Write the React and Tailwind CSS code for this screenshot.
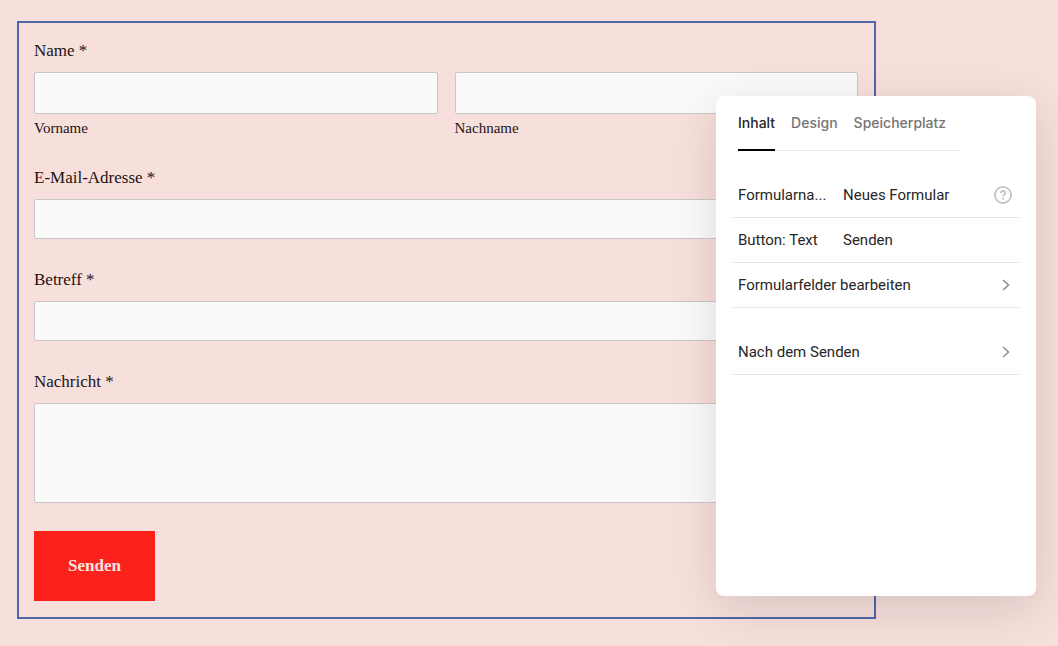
import React, { useState } from "react";
import { clsx } from "clsx";

const tabs = ["Inhalt", "Design", "Speicherplatz"];

const fieldStyle =
  "block w-full rounded-xs border border-[#c9c7c7] bg-[#fafafa] px-3 text-base text-[#1d1414] outline-none";

function Field({ id, label, multiline }) {
  return (
    <div>
      <label htmlFor={id} className="mb-2 block text-[17px] leading-[26px]">
        {label} *
      </label>
      {multiline ? (
        <textarea id={id} className={clsx(fieldStyle, "h-[100px] resize-none")} />
      ) : (
        <input id={id} type="text" className={clsx(fieldStyle, "h-10")} />
      )}
    </div>
  );
}

function NameField({ id, caption }) {
  return (
    <div className="flex-1">
      <input id={id} type="text" className={clsx(fieldStyle, "h-[42px]")} />
      <label htmlFor={id} className="mt-[5px] block text-[15px] leading-[18px]">
        {caption}
      </label>
    </div>
  );
}

function ContactForm() {
  return (
    <form
      onSubmit={(e) => e.preventDefault()}
      className="flex flex-col gap-7 border-2 border-[#5066a8] pt-[15px] pr-4 pb-4 pl-[15px] font-['Liberation_Serif',serif] text-[#1d1414]"
    >
      <fieldset>
        <legend className="mb-2 text-[17px] leading-[26px]">Name *</legend>
        <div className="flex gap-[17px]">
          <NameField id="vorname" caption="Vorname" />
          <NameField id="nachname" caption="Nachname" />
        </div>
      </fieldset>
      <Field id="email" label="E-Mail-Adresse" />
      <Field id="betreff" label="Betreff" />
      <Field id="nachricht" label="Nachricht" multiline />
      <button
        type="submit"
        className="h-[70px] self-start bg-[#fc221b] px-[34px] text-[17px] font-bold text-[#fde3e0]"
      >
        Senden
      </button>
    </form>
  );
}

function HelpIcon() {
  return (
    <svg viewBox="0 0 20 20" className="mr-px size-5" fill="none" stroke="#c4c4c4" strokeWidth="1.8">
      <circle cx="10" cy="10" r="8.1" />
      <path d="M7.7 8.2c0-1.4 1-2.2 2.3-2.2s2.3.8 2.3 2c0 1.6-2.2 1.700-2.200 3.500" />
      <path d="M10.100 12.800v1.700" />
    </svg>
  );
}

function Chevron() {
  return (
    <svg viewBox="0 0 10 12" className="mr-[3px] h-3 w-2.5" fill="none" stroke="#8f8f8f" strokeWidth="1.6">
      <path d="M2 1l5.500 5L2 11" />
    </svg>
  );
}

function TextRow({ id, label, value, help }) {
  return (
    <div className="flex h-[45px] items-center border-b border-[#e4e4e4] px-[5px]">
      <label htmlFor={id} className="w-[105px] shrink-0">
        {label}
      </label>
      <input id={id} type="text" defaultValue={value} className="min-w-0 flex-1 outline-none" />
      {help && (
        <button type="button" aria-label="Hilfe">
          <HelpIcon />
        </button>
      )}
    </div>
  );
}

function LinkRow({ label }) {
  return (
    <button
      type="button"
      className="flex h-[45px] w-full items-center justify-between border-b border-[#e4e4e4] px-[5px] text-left"
    >
      {label}
      <Chevron />
    </button>
  );
}

function SettingsPanel() {
  const [active, setActive] = useState("Inhalt");

  return (
    <aside className="absolute top-24 right-[22px] min-h-[500px] w-80 rounded-lg bg-white px-[17px] font-['Roboto',sans-serif] text-[15px] text-[#262626] shadow-[0_12px_50px_rgba(0,0,0,0.13)]">
      <div
        role="tablist"
        className="mr-[58px] ml-[5px] flex h-[55px] gap-4 border-b border-[#ebebeb] font-['Inter',sans-serif] text-sm font-medium"
      >
        {tabs.map((tab) => (
          <button
            key={tab}
            type="button"
            role="tab"
            aria-selected={active === tab}
            onClick={() => setActive(tab)}
            className={clsx(
              "-mb-px h-[55px] border-b-2 pt-px",
              active === tab ? "border-black text-[#262626]" : "border-transparent text-[#757575]"
            )}
          >
            {tab}
          </button>
        ))}
      </div>
      <div className="mt-[22px]">
        <TextRow id="formularname" label="Formularna..." value="Neues Formular" help />
        <TextRow id="button-text" label="Button: Text" value="Senden" />
        <LinkRow label="Formularfelder bearbeiten" />
      </div>
      <div className="mt-[22px]">
        <LinkRow label="Nach dem Senden" />
      </div>
    </aside>
  );
}

export default function App() {
  return (
    <div className="relative min-h-screen overflow-hidden bg-[#f7dfdb] pt-[21px] pr-[182px] pb-[27px] pl-[17px]">
      <ContactForm />
      <SettingsPanel />
    </div>
  );
}
